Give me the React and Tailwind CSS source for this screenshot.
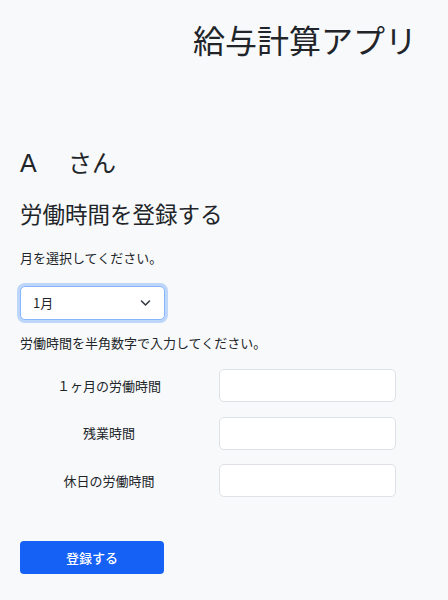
import React, { useState } from "react";

const font = { fontFamily: '"Noto Sans CJK JP", "Noto Sans", sans-serif' };

function HoursRow({ label, value, onChange }) {
  return (
    <div className="flex items-center">
      <label className="w-[178px] text-center text-[13px] leading-[20px] text-[#212529]">
        {label}
      </label>
      <input
        type="text"
        value={value}
        onChange={(e) => onChange(e.target.value)}
        className="ml-[21px] h-[33px] w-[177px] rounded-[5px] border border-[#dee2e6] bg-white px-3 text-[13px] outline-none"
      />
    </div>
  );
}

export default function App() {
  const [month, setMonth] = useState("1");
  const [hours, setHours] = useState({ total: "", overtime: "", holiday: "" });

  return (
    <div className="min-h-[600px] w-full bg-[#f8f9fa] text-[#212529]" style={font}>
      {/* Header */}
      <div className="flex justify-end pr-[31px] pt-[19px]">
        <h1 className="text-[32px] leading-[40px] font-normal">給与計算アプリ</h1>
      </div>

      <div className="px-[20px]">
        <h2 className="mt-[87px] text-[24px] leading-[32px] font-normal">
          <span className="inline-block w-[48px] text-[25px]" style={{ fontFamily: '"Liberation Sans", sans-serif' }}>
            A
          </span>
          さん
        </h2>
        <h3 className="mt-[19px] text-[22.5px] leading-[30px] font-normal">労働時間を登録する</h3>

        <p className="mt-[20px] text-[13px] leading-[20px]">月を選択してください。</p>

        {/* Month select */}
        <div className="relative mt-[18px] w-[145px]">
          <select
            value={month}
            onChange={(e) => setMonth(e.target.value)}
            className="h-[34px] w-full appearance-none rounded-[5px] border border-[#86b7fe] bg-white pl-[12px] text-[13px] text-[#212529] shadow-[0_0_0_3px_rgba(13,110,253,0.25)] outline-none"
          >
            {Array.from({ length: 12 }, (_, i) => (
              <option key={i} value={String(i + 1)}>
                {i + 1}月
              </option>
            ))}
          </select>
          <svg
            className="pointer-events-none absolute right-[14px] top-[13px]"
            width="11"
            height="8"
            viewBox="0 0 11 8"
            fill="none"
          >
            <path d="M1.5 2l4 4 4-4" stroke="#343a40" strokeWidth="1.6" strokeLinecap="round" strokeLinejoin="round" />
          </svg>
        </div>

        <p className="mt-[13px] text-[13px] leading-[20px]">労働時間を半角数字で入力してください。</p>

        {/* Hours inputs */}
        <div className="mt-[16px] flex flex-col gap-[14.5px]">
          <HoursRow
            label="１ヶ月の労働時間"
            value={hours.total}
            onChange={(v) => setHours({ ...hours, total: v })}
          />
          <HoursRow
            label="残業時間"
            value={hours.overtime}
            onChange={(v) => setHours({ ...hours, overtime: v })}
          />
          <HoursRow
            label="休日の労働時間"
            value={hours.holiday}
            onChange={(v) => setHours({ ...hours, holiday: v })}
          />
        </div>

        <button className="mt-[44px] h-[33px] w-[144px] rounded-[4px] bg-[#1561f6] text-[13px] font-medium text-white">
          登録する
        </button>
      </div>
    </div>
  );
}
